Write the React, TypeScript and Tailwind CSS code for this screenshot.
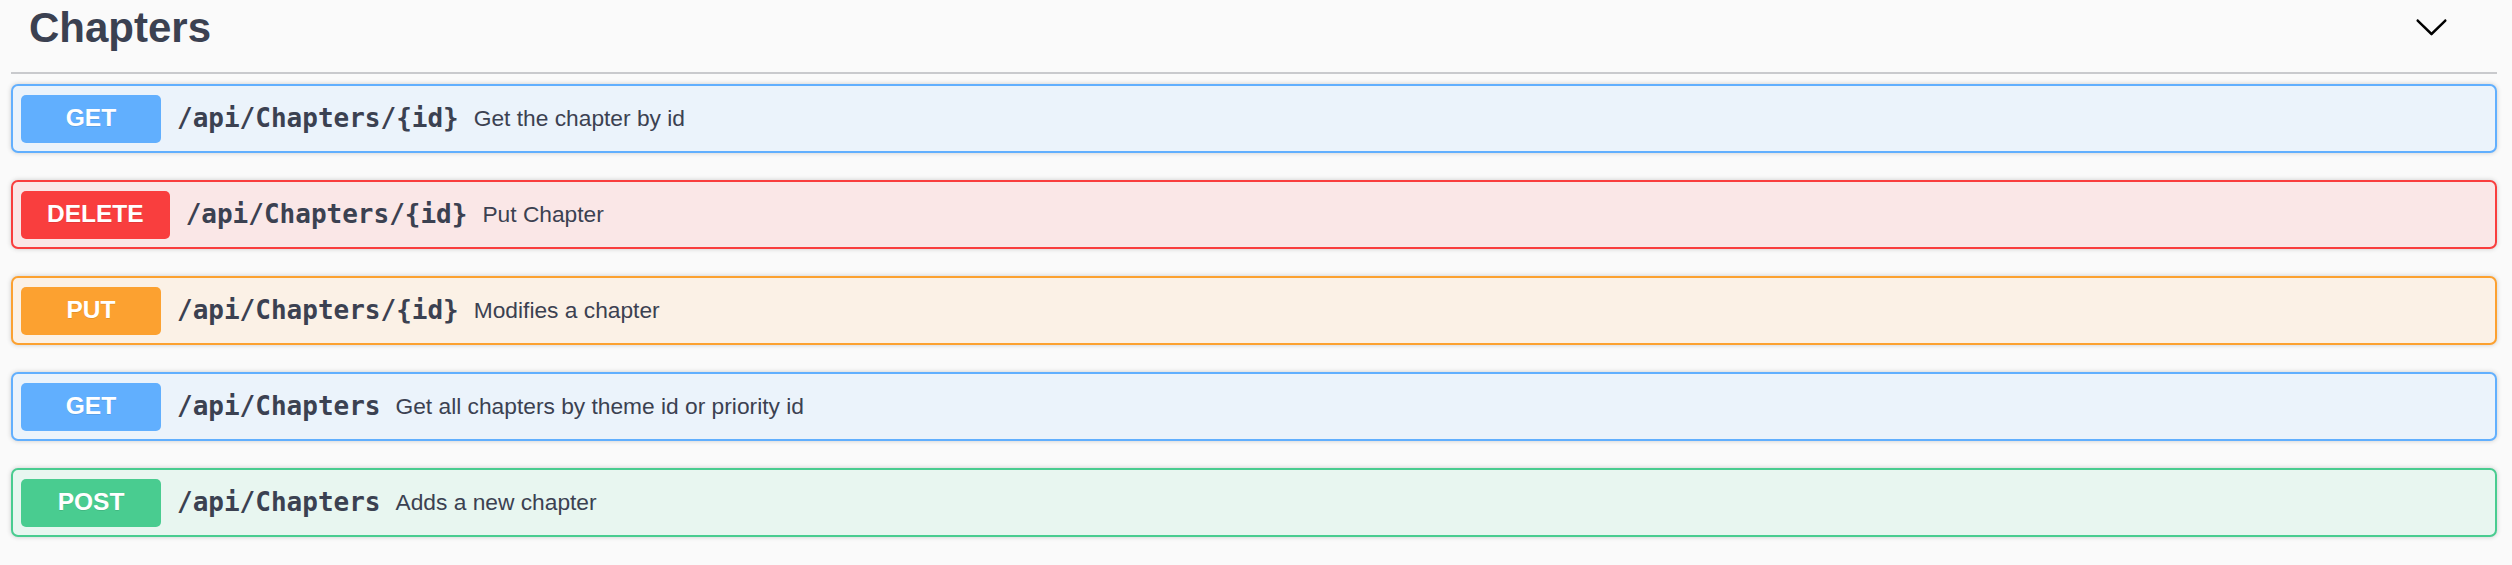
const operations = [
  {
    method: "GET",
    path: "/api/Chapters/{id}",
    summary: "Get the chapter by id",
    block: "border-[#61affe] bg-[#ebf3fb]",
    badge: "bg-[#61affe]",
  },
  {
    method: "DELETE",
    path: "/api/Chapters/{id}",
    summary: "Put Chapter",
    block: "border-[#f93e3e] bg-[#fae7e7]",
    badge: "bg-[#f93e3e]",
  },
  {
    method: "PUT",
    path: "/api/Chapters/{id}",
    summary: "Modifies a chapter",
    block: "border-[#fca130] bg-[#fbf1e6]",
    badge: "bg-[#fca130]",
  },
  {
    method: "GET",
    path: "/api/Chapters",
    summary: "Get all chapters by theme id or priority id",
    block: "border-[#61affe] bg-[#ebf3fb]",
    badge: "bg-[#61affe]",
  },
  {
    method: "POST",
    path: "/api/Chapters",
    summary: "Adds a new chapter",
    block: "border-[#49cc90] bg-[#e8f6f0]",
    badge: "bg-[#49cc90]",
  },
];

function Chevron() {
  return (
    <svg viewBox="0 0 20 20" className="mt-[9px] h-[35px] w-[35px] fill-black">
      <path d="M17.418 6.109c.272-.268.709-.268.979 0s.271.701 0 .969l-7.908 7.83c-.27.268-.707.268-.979 0l-7.908-7.83c-.27-.268-.27-.701 0-.969.271-.268.709-.268.979 0L10 13.25l7.418-7.141z" />
    </svg>
  );
}

export default function App() {
  return (
    <div className="min-h-[565px] w-full bg-[#fafafa] pl-[11px] pr-[15px] text-[#3b4151]">
      <div className="flex h-[74px] items-start justify-between border-b-2 border-[#c9cacd] pr-[48px]">
        <h3 className="mt-[4px] pl-[18px] font-['Liberation_Sans',Arial,sans-serif] text-[42px] font-bold leading-[48px]">
          Chapters
        </h3>
        <Chevron />
      </div>

      <div className="mt-[10px] flex flex-col gap-[27px]">
        {operations.map((op, i) => (
          <div
            key={i}
            className={`flex h-[69px] items-center rounded-[7px] border-2 pl-[8px] shadow-[0_0_5px_rgba(0,0,0,0.19)] ${op.block}`}
          >
            <span
              className={`flex h-[48px] min-w-[140px] items-center justify-center rounded-[5px] px-[26px] font-['Liberation_Sans',Arial,sans-serif] text-[24.5px] font-bold text-white [text-shadow:0_1px_0_rgba(0,0,0,0.1)] ${op.badge}`}
            >
              {op.method}
            </span>
            <span className="pl-[16px] pr-[15px] font-['DejaVu_Sans_Mono',monospace] text-[26px] font-bold">
              {op.path}
            </span>
            <span className="font-['Liberation_Sans',Arial,sans-serif] text-[22.75px]">{op.summary}</span>
          </div>
        ))}
      </div>
    </div>
  );
}
